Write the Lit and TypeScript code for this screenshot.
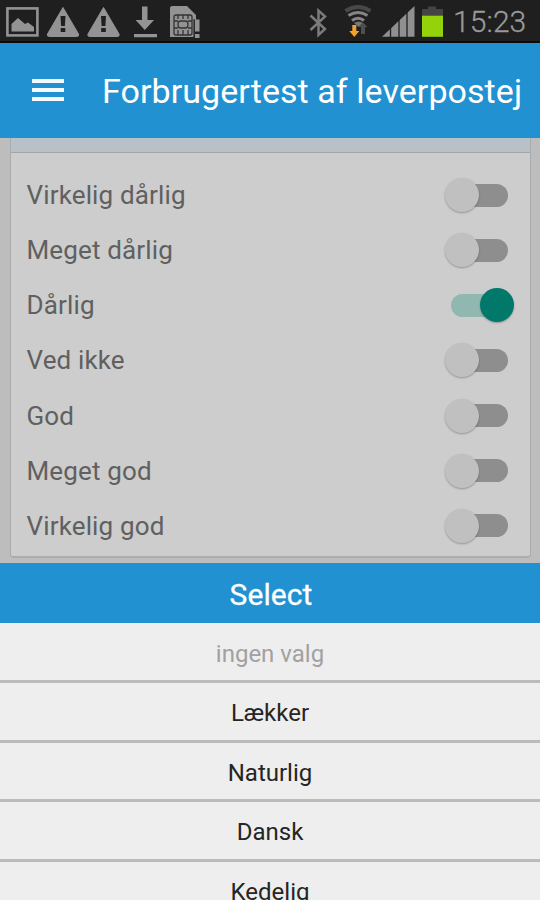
import { LitElement, html, css } from "lit";
import { customElement, property } from "lit/decorators.js";

@customElement("toggle-switch")
class ToggleSwitch extends LitElement {
  @property({ type: Boolean, reflect: true }) on = false;
  static styles = css`
    :host { display: flex; align-items: center; width: 70px; height: 36px; }
    .track { flex: none; width: 57px; height: 23px; margin-left: 7px; border-radius: 12px; background: #8e8e8e; display: flex; align-items: center; }
    .thumb { flex: none; width: 34px; height: 34px; border-radius: 50%; background: #c0c0c0; margin-left: -6px; box-shadow: 0 1px 2px rgba(0,0,0,.28); }
    :host([on]) .track { background: #90b8b1; }
    :host([on]) .thumb { background: #00796b; margin-left: 29px; }
  `;
  render() {
    return html`<div class="track"><div class="thumb"></div></div>`;
  }
}

@customElement("status-bar")
class StatusBar extends LitElement {
  static styles = css`
    :host { display: flex; height: 43px; box-sizing: border-box; background: #1f1f1f; border-bottom: 2px solid #0c0a0c; overflow: hidden; }
    svg { flex: none; display: block; }
    .time { margin-left: 3px; font: 300 30px/43px Roboto, sans-serif; color: #9a9a9a; letter-spacing: .1px; white-space: nowrap; -webkit-text-stroke: .3px #9a9a9a; }
  `;
  render() {
    return html`
      <svg width="450" height="42" viewBox="0 0 450 42">
        <g fill="#939393">
          <rect x="7.400" y="8.400" width="30" height="27" fill="none" stroke="#939393" stroke-width="2.600"/>
          <path d="M11.500 31.500V24l6.500-6 7 6 3-1.500 6 4.500v4.500z"/>
          <path d="M63 7.500 78.500 34q1 2.500-2 2.500h-27q-3 0-2-2.500zM103.500 7.500 119 34q1 2.500-2 2.500H90q-3 0-2-2.500z" stroke="#939393" stroke-width="1" stroke-linejoin="round"/>
          <path d="M142 6.500h5.500V20h6.500l-9.200 10-9.200-10h6.400zM134 34h23v3.300h-23z"/>
          <path d="M171.500 6H187l9 9v5h-2v17h-24V7.500z"/>
          <path d="M195 19.500h4.500v12H195zM195 34h4.500v4H195z"/>
        </g>
        <g fill="#1f1f1f">
          <path d="M60.500 16h5l-.6 10h-3.800zM60.700 28h4.600v4h-4.600zM101 16h5l-.6 10h-3.800zM101.200 28h4.600v4h-4.600z"/>
        </g>
        <g fill="none" stroke="#333" stroke-width="1.300">
          <rect x="174" y="15" width="18" height="20" rx="2"/>
          <rect x="178" y="21" width="10" height="7" rx="3"/>
          <path d="M178 15v4M183 15v4M188 15v4M178 30v5M183 30v5M188 30v5M174 21h4M174 28h4M188 21h4M188 28h4M194 19v18"/>
        </g>
        <path d="M310.500 15.500 325 29l-6.500 6V10.500L325 16.500 310.500 30" fill="none" stroke="#7b7b7b" stroke-width="2.500"/>
        <path d="M345.500 11q12.500-8 25 0" fill="none" stroke="#484848" stroke-width="4"/>
        <path d="M348.500 15.500q9.500-6 19 0M352 20.500q6-4.500 12 0" fill="none" stroke="#858585" stroke-width="3"/>
        <path d="m354 23 4.500 4 4.500-4q-4.500-3-9 0z" fill="#777"/>
        <path d="M361 34v-7h-2.500l4.500-4.500 4.500 4.500H365v7z" fill="#4f4f4f"/>
        <path d="M352.300 25h4v6h3l-5 6-5-6h3z" fill="#f6a12b"/>
        <path d="M382 36.800 414.500 6v30.800z" fill="#909090"/>
        <path d="M390.500 26v11M399 18v19M407 10v27" stroke="#1f1f1f" stroke-width="1.300"/>
        <path d="M422 16V9h6V6.500h8V9h7v7z" fill="#444"/>
        <path d="M422 15.700h21V36.800h-21z" fill="#94d30a"/>
      </svg>
      <div class="time">15:23</div>
    `;
  }
}

@customElement("app-root")
class AppRoot extends LitElement {
  private answers = ["Virkelig dårlig", "Meget dårlig", "Dårlig", "Ved ikke", "God", "Meget god", "Virkelig god"];
  private selected = "Dårlig";
  private options = ["Lækker", "Naturlig", "Dansk", "Kedelig"];

  static styles = css`
    :host { display: flex; flex-direction: column; width: 540px; height: 900px; overflow: hidden; background: #bdbdbd; font-family: Roboto, sans-serif; }
    status-bar { flex: none; }
    header { flex: none; height: 94.500px; background: #2191d1; display: flex; align-items: center; color: #fff; }
    .menu { flex: none; width: 32px; margin: 0 38px 0 32px; display: flex; flex-direction: column; gap: 5px; }
    .menu i { height: 4px; background: #f4fbff; }
    h1 { margin: 0; padding-top: 2px; font-size: 34px; font-weight: 400; line-height: 44px; white-space: nowrap; letter-spacing: .06px; }
    main { flex: none; height: 425px; padding: 0 9px 0 10px; box-sizing: border-box; }
    .card { height: 420px; box-sizing: border-box; border: 1px solid #a9abad; border-top: 0; border-bottom: 2px solid #adadad; border-radius: 0 0 4px 4px; background: #cdcdcd; }
    .strip { height: 14px; background: #b9c1c8; border-bottom: 1.500px solid #a2a7ab; }
    .rows { padding-top: 15px; }
    .row { height: 55.150px; display: flex; align-items: center; justify-content: space-between; padding: 0 16px 0 15.500px; }
    .label { font-size: 26px; color: #606060; letter-spacing: .15px; white-space: nowrap; }
    h2 { flex: none; margin: 0; height: 60px; background: #2191d1; color: #fff; font-size: 30px; font-weight: 400; line-height: 63px; text-align: center; letter-spacing: .1px; padding-left: 2px; -webkit-text-stroke: .3px #fff; }
    .option { flex: none; box-sizing: border-box; height: 59.500px; border-bottom: 3px solid #bbb; background: #eee; color: #252525; font-size: 24px; line-height: 61px; text-align: center; }
    .hint { height: 60.500px; line-height: 63px; color: #a1a1a1; }
  `;

  render() {
    return html`
      <status-bar></status-bar>
      <header><div class="menu"><i></i><i></i><i></i></div><h1>Forbrugertest af leverpostej</h1></header>
      <main>
        <div class="card">
          <div class="strip"></div>
          <div class="rows">
            ${this.answers.map((a) => html`<div class="row"><span class="label">${a}</span><toggle-switch ?on=${a === this.selected}></toggle-switch></div>`)}
          </div>
        </div>
      </main>
      <h2>Select</h2>
      <div class="option hint">ingen valg</div>
      ${this.options.map((o) => html`<div class="option">${o}</div>`)}
    `;
  }
}
